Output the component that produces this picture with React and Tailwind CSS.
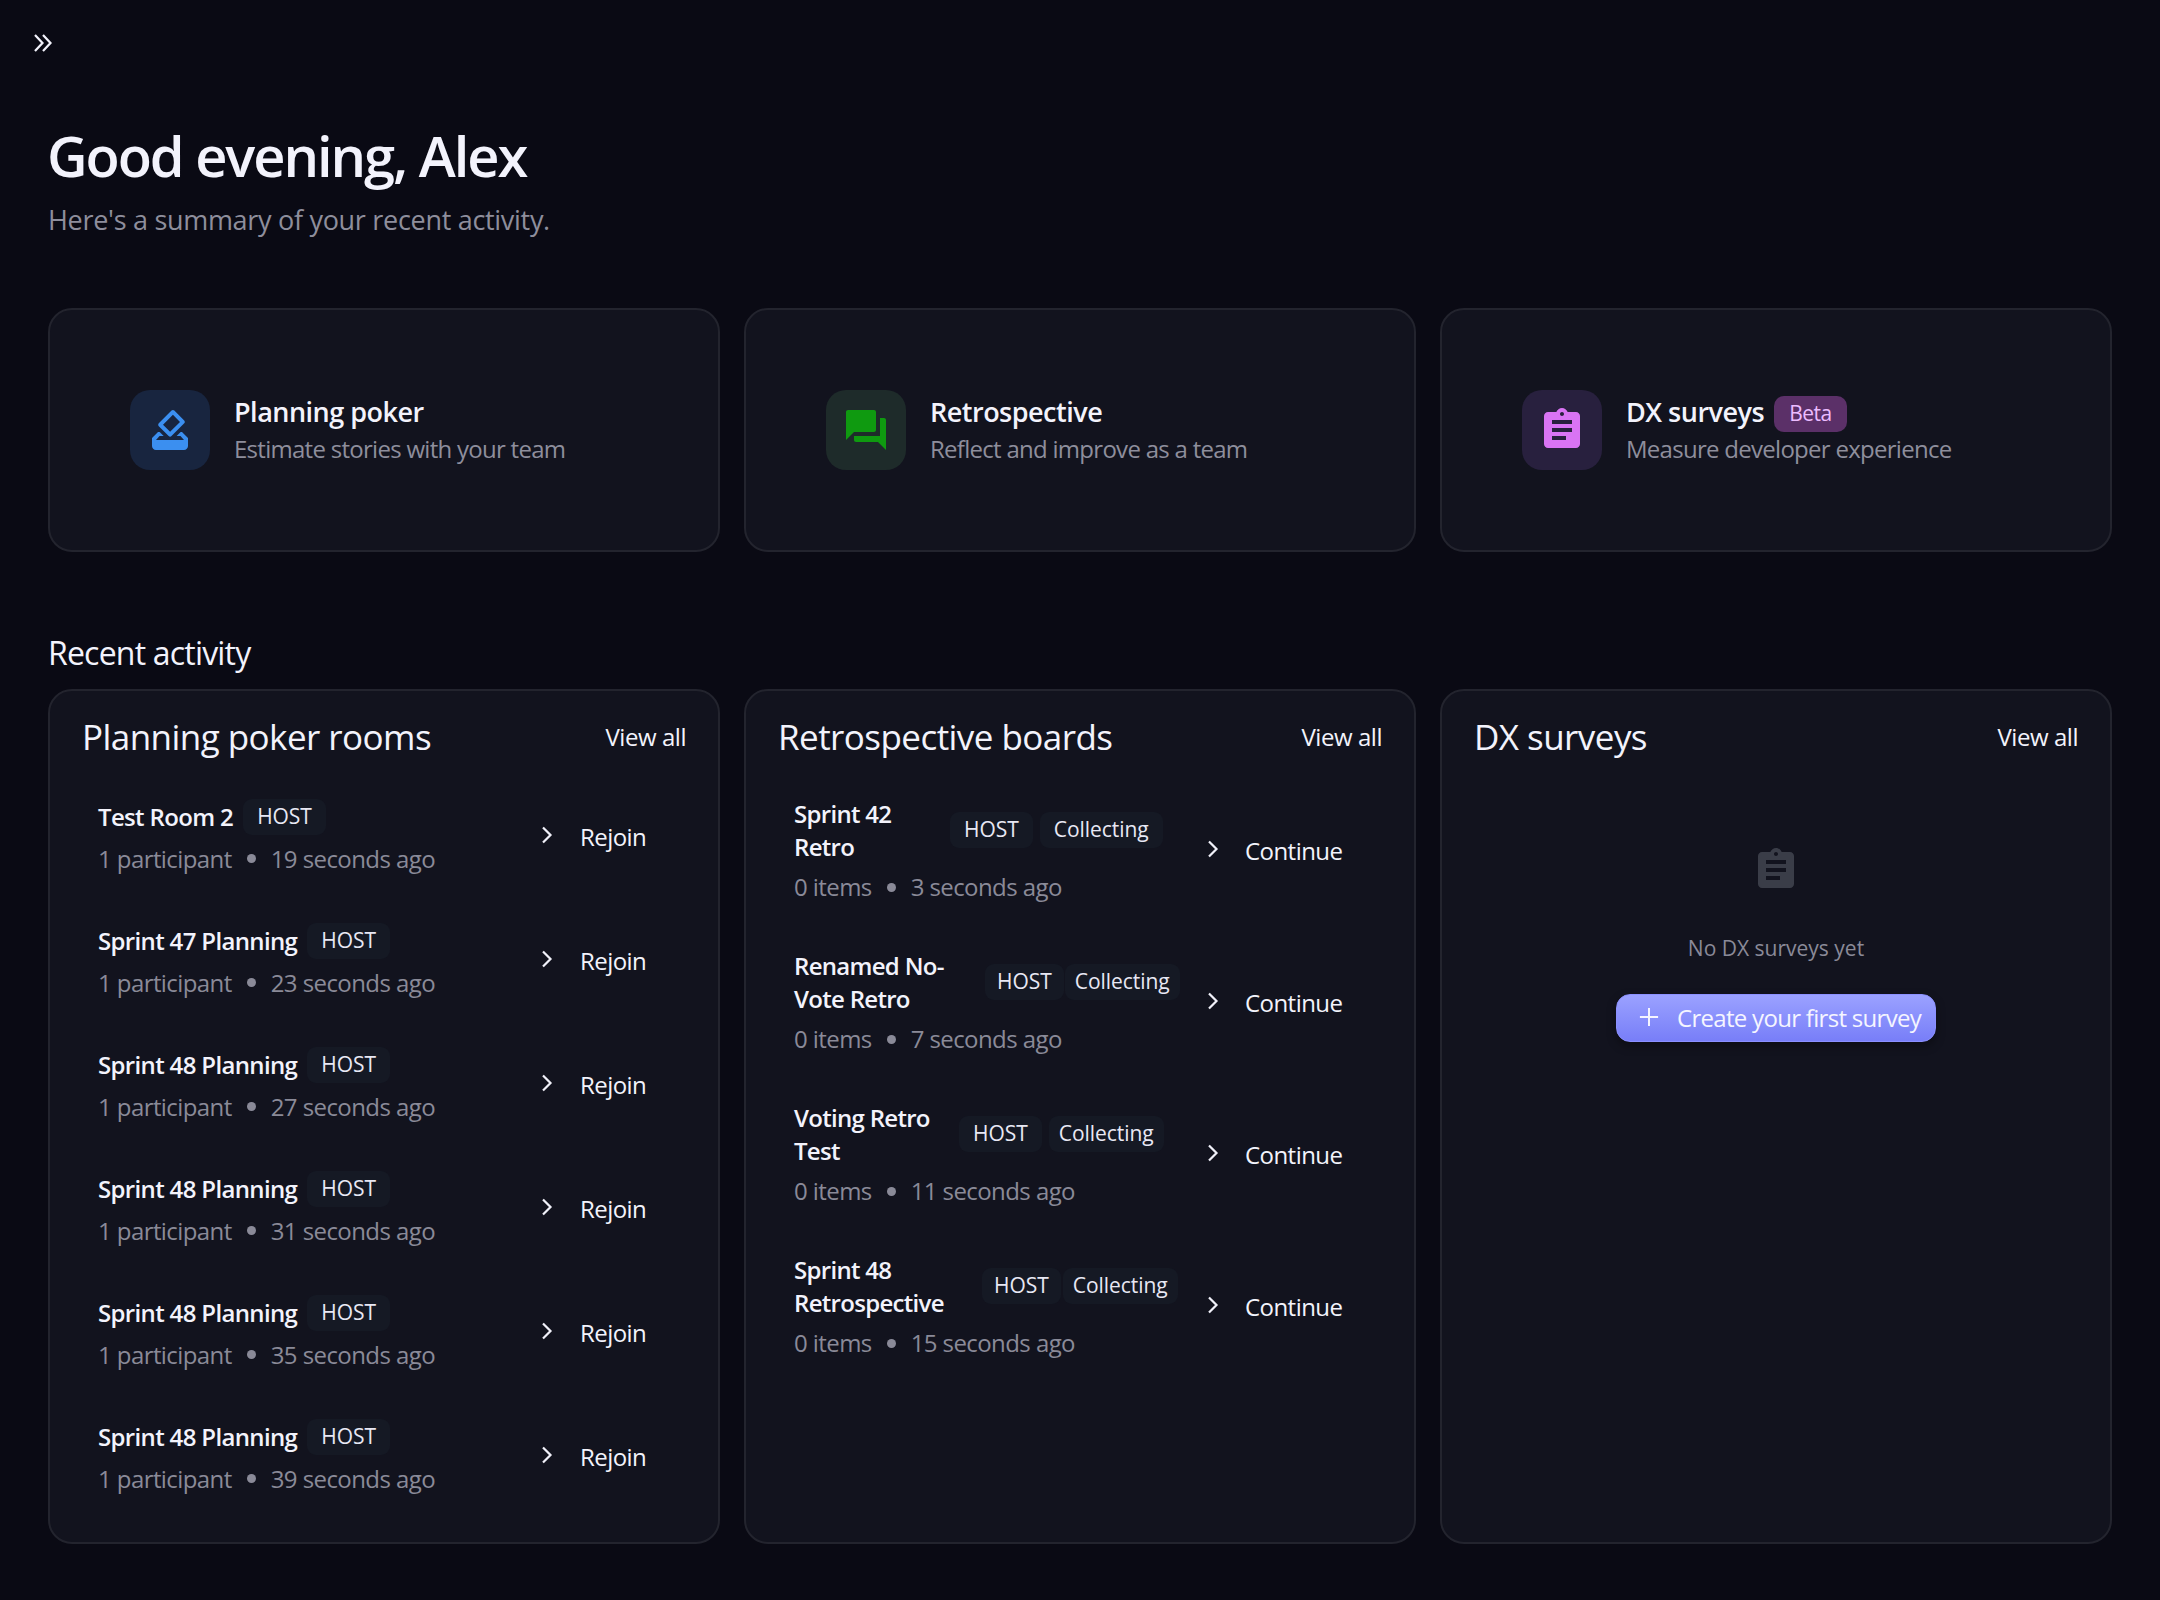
import React from "react";

const Forum = (p) => (
  <svg viewBox="0 0 24 24" fill="currentColor" {...p}>
    <path d="M21 6h-2v9H6v2c0 .55.45 1 1 1h11l4 4V7c0-.55-.45-1-1-1zm-4 6V3c0-.55-.45-1-1-1H3c-.55 0-1 .45-1 1v14l4-4h10c.55 0 1-.45 1-1z" />
  </svg>
);
const Assignment = (p) => (
  <svg viewBox="0 0 24 24" fill="currentColor" {...p}>
    <path d="M19 3h-4.18C14.4 1.84 13.3 1 12 1c-1.3 0-2.4.84-2.82 2H5c-1.1 0-2 .9-2 2v14c0 1.1.9 2 2 2h14c1.1 0 2-.9 2-2V5c0-1.1-.9-2-2-2zm-7 0c.55 0 1 .45 1 1s-.45 1-1 1-1-.45-1-1 .45-1 1-1zm2 14H7v-2h7v2zm3-4H7v-2h10v2zm0-4H7V7h10v2z" />
  </svg>
);
const Vote = (p) => (
  <svg viewBox="0 0 24 24" fill="currentColor" {...p}>
    <path d="M18 13h-.68l-2 2h1.91L19 17H5l1.78-2h2.05l-2-2H6l-3 3v4c0 1.1.89 2 1.99 2H19c1.1 0 2-.89 2-2v-4l-3-3zm-1-5.05l-4.95 4.95-3.54-3.54 4.95-4.95L17 7.95zm-4.24-5.66L6.39 8.66c-.39.39-.39 1.02 0 1.41l4.95 4.95c.39.39 1.02.39 1.41 0l6.36-6.36c.39-.39.39-1.02 0-1.41L14.16 2.3c-.38-.4-1.01-.4-1.4-.01z" />
  </svg>
);
const Chevron = () => (
  <svg viewBox="0 0 12 18" className="w-[12px] h-[18px]" fill="none" stroke="#f1f1fa" strokeWidth="2.2">
    <path d="M2 1.5 L9.5 9 L2 16.5" />
  </svg>
);
const Tag = ({ children, cls = "px-[14px]" }) => (
  <span className={"h-[36px] flex items-center rounded-[9px] bg-[#151924] text-[21px] tracking-[-0.05px] text-[#e8e8f4] " + cls}>{children}</span>
);

const Feature = ({ box, color, Icon, title, badge, sub }) => (
  <div className="h-[244px] rounded-[24px] border-2 border-[#23242e] bg-[#12131e] flex items-center pl-[80px] gap-[24px]">
    <div className={"w-[80px] h-[80px] rounded-[20px] flex items-center justify-center " + box}>
      <Icon className={"w-[48px] h-[48px] " + color} />
    </div>
    <div className="flex flex-col">
      <div className="flex items-center gap-[10px] h-[38px]">
        <span className="text-[27px] font-semibold tracking-[-0.5px] text-[#f3f3fc]">{title}</span>
        {badge && <span className="h-[36px] px-[15px] translate-y-[2px] flex items-center rounded-[10px] bg-[#5b3068] text-[21px] tracking-[-0.5px] text-[#ecbcff]">{badge}</span>}
      </div>
      <span className="text-[24px] leading-[36px] tracking-[-0.72px] text-[#8e8e9c]">{sub}</span>
    </div>
  </div>
);

const Panel = ({ title, children }) => (
  <section className="h-[855px] rounded-[24px] border-2 border-[#23242e] bg-[#12131e] pt-[22px] px-[32px] flex flex-col">
    <header className="h-[48px] flex items-center justify-between">
      <h3 className="text-[35px] tracking-[-0.55px] text-[#f3f3fc]">{title}</h3>
      <span className="text-[24px] tracking-[-0.45px] text-[#f3f3fc]">View all</span>
    </header>
    <div className="mt-[14px] flex flex-col">{children}</div>
  </section>
);

const Meta = ({ a, b }) => (
  <div className="flex items-center text-[24px] leading-[36px] tracking-[-0.58px] text-[#8a8a98]">
    <span>{a}</span>
    <span className="mx-[15px] w-[9px] h-[9px] rounded-full bg-[#8a8a98]" />
    <span>{b}</span>
  </div>
);

const Action = ({ label, w, gap }) => (
  <div className={"flex items-center text-[24px] tracking-[-0.55px] text-[#f3f3fc] " + w + " " + gap}>
    <span className="-translate-y-[2px]"><Chevron /></span>
    <span>{label}</span>
  </div>
);

const poker = [
  ["Test Room 2", "19 seconds ago"],
  ["Sprint 47 Planning", "23 seconds ago"],
  ["Sprint 48 Planning", "27 seconds ago"],
  ["Sprint 48 Planning", "31 seconds ago"],
  ["Sprint 48 Planning", "35 seconds ago"],
  ["Sprint 48 Planning", "39 seconds ago"],
];

const retro = [
  { t: ["Sprint 42", "Retro"], w: "w-[156px]", a: "px-[14px]", g: "gap-[7px]", b: "3 seconds ago", c: "px-[14px]" },
  { t: ["Renamed No-", "Vote Retro"], w: "w-[191px]", a: "px-[12px]", g: "gap-[1px]", b: "7 seconds ago", c: "px-[10px]" },
  { t: ["Voting Retro", "Test"], w: "w-[165px]", a: "px-[14px]", g: "gap-[7px]", b: "11 seconds ago", c: "px-[10px]" },
  { t: ["Sprint 48", "Retrospective"], w: "w-[188px]", a: "px-[12px]", g: "gap-[2px]", b: "15 seconds ago", c: "px-[10px]" },
];

export default function App() {
  return (
    <div className="min-h-[1600px] bg-[#0a0a14] font-['Open_Sans',sans-serif] px-[48px]">
      <div className="h-[90px] -ml-[15px] pt-[34px]">
        <svg viewBox="0 0 20 18" className="w-[20px] h-[18px]" fill="none" stroke="#f3f3fc" strokeWidth="2.2">
          <path d="M2 1 L9.5 9 L2 17 M10 1 L17.5 9 L10 17" />
        </svg>
      </div>
      <h1 className="mt-[32px] -ml-[1px] text-[56px] leading-[66px] font-semibold tracking-[-2.05px] text-[#f3f3fc]">Good evening, Alex</h1>
      <p className="mt-[12px] text-[27px] leading-[40px] tracking-[-0.3px] text-[#8e8e9c]">Here's a summary of your recent activity.</p>

      <div className="mt-[68px] grid grid-cols-3 gap-[24px]">
        <Feature box="bg-[#18253f]" color="text-[#3b8ff0]" Icon={Vote} title="Planning poker" sub="Estimate stories with your team" />
        <Feature box="bg-[#1e2b2a]" color="text-[#0f9a10]" Icon={Forum} title="Retrospective" sub="Reflect and improve as a team" />
        <Feature box="bg-[#28203e]" color="text-[#d974f4]" Icon={Assignment} title="DX surveys" badge="Beta" sub="Measure developer experience" />
      </div>

      <h2 className="mt-[78px] h-[46px] text-[32px] leading-[46px] tracking-[-0.8px] text-[#f3f3fc]">Recent activity</h2>
      <div className="mt-[13px] grid grid-cols-3 gap-[24px]">
        <Panel title="Planning poker rooms">
          {poker.map(([t, b], i) => (
            <div key={i} className="h-[124px] pl-[16px] flex items-center justify-between">
              <div className="flex flex-col">
                <div className="flex items-center gap-[10px] h-[38px]">
                  <span className="text-[24px] font-semibold tracking-[-0.65px] text-[#f3f3fc]">{t}</span>
                  <Tag>HOST</Tag>
                </div>
                <div className="mt-[5px]"><Meta a="1 participant" b={b} /></div>
              </div>
              <Action label="Rejoin" w="w-[145px]" gap="gap-[27px]" />
            </div>
          ))}
        </Panel>
        <Panel title="Retrospective boards">
          {retro.map((r, i) => (
            <div key={i} className="h-[152px] pl-[16px] flex items-center justify-between">
              <div className="flex flex-col">
                <div className="flex items-center">
                  <span className={"text-[24px] leading-[33px] font-semibold tracking-[-0.7px] text-[#f3f3fc] " + r.w}>{r.t[0]}<br />{r.t[1]}</span>
                  <div className={"flex items-center " + r.g}>
                    <Tag cls={r.a}>HOST</Tag>
                    <Tag cls={r.c}>Collecting</Tag>
                  </div>
                </div>
                <div className="mt-[6px]"><Meta a="0 items" b={r.b} /></div>
              </div>
              <Action label="Continue" w="w-[175px]" gap="gap-[26px]" />
            </div>
          ))}
        </Panel>
        <Panel title="DX surveys">
          <div className="flex flex-col items-center pt-[71px]">
            <Assignment className="w-[48px] h-[48px] text-[#3a3d48]" />
            <p className="mt-[38px] text-[21px] leading-[32px] tracking-[0px] text-[#8a8a98]">No DX surveys yet</p>
            <button className="mt-[30px] h-[48px] w-[320px] rounded-[14px] border border-[#8b90ff] bg-gradient-to-b from-[#9ba1ff] to-[#787ef8] shadow-[0_4px_10px_rgba(0,0,0,0.35)] flex items-center pl-[22px] gap-[18px] text-[24px] tracking-[-0.7px] text-[#f5f5ff]">
              <svg viewBox="0 0 22 22" className="w-[20px] h-[20px] -translate-y-[1px]" fill="none" stroke="#f5f5ff" strokeWidth="2.2"><path d="M11 1 V21 M1 11 H21" /></svg>
              <span>Create your first survey</span>
            </button>
          </div>
        </Panel>
      </div>
    </div>
  );
}
